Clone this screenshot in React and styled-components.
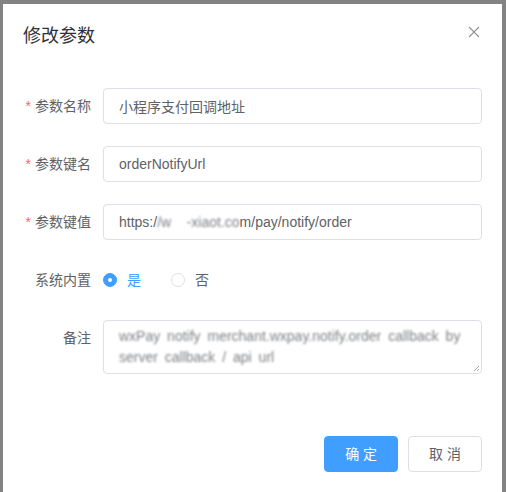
import React from "react";
import styled, { createGlobalStyle } from "styled-components";

const GlobalStyle = createGlobalStyle`
  html, body { margin: 0; padding: 0; }
  body {
    font-family: "Liberation Sans", "Noto Sans CJK SC", sans-serif;
    background: #838383;
  }
  * { box-sizing: border-box; }
`;

const Overlay = styled.div`
  width: 506px;
  height: 492px;
  background: #838383;
  padding: 4px 4px 0 3px;
  overflow: hidden;
`;

const Dialog = styled.div`
  width: 499px;
  min-height: 488px;
  background: #ffffff;
  display: flex;
  flex-direction: column;
`;

const Header = styled.div`
  display: flex;
  justify-content: space-between;
  align-items: flex-start;
  padding: 20px 20px 10px;
`;

const Title = styled.span`
  font-size: 18px;
  line-height: 24px;
  color: #303133;
`;

const CloseButton = styled.button`
  width: 16px;
  height: 16px;
  padding: 0;
  border: none;
  background: transparent;
  display: flex;
  align-items: center;
  justify-content: center;
  cursor: pointer;
`;

const Body = styled.div`
  padding: 30px 20px 30px;
`;

const FormItem = styled.div`
  display: flex;
  align-items: flex-start;
  margin-bottom: 22px;
`;

const Label = styled.label`
  width: 80px;
  flex: none;
  text-align: right;
  padding-right: 12px;
  line-height: 36px;
  font-size: 14px;
  color: #606266;
  white-space: nowrap;
`;

const Star = styled.span`
  color: #f56c6c;
  margin-right: 4px;
`;

const InputBox = styled.div`
  flex: 1;
  height: 36px;
  border: 1px solid #dcdfe6;
  border-radius: 4px;
  padding: 0 15px;
  display: flex;
  align-items: center;
  font-size: 14px;
  color: #606266;
  white-space: pre;
`;

const Redacted = styled.span`
  filter: blur(1.2px);
  color: #7d7f83;
`;

const RadioGroup = styled.div`
  display: flex;
  align-items: center;
  height: 36px;
`;

const Radio = styled.label`
  display: flex;
  align-items: center;
  margin-right: 30px;
  font-size: 14px;
  color: ${(p) => (p.$checked ? "#409eff" : "#606266")};
  cursor: pointer;
`;

const RadioDot = styled.span`
  width: 14px;
  height: 14px;
  border-radius: 50%;
  border: 1px solid ${(p) => (p.$checked ? "#409eff" : "#dcdfe6")};
  background: ${(p) => (p.$checked ? "#409eff" : "#ffffff")};
  display: flex;
  align-items: center;
  justify-content: center;
  &::after {
    content: "";
    width: 4px;
    height: 4px;
    border-radius: 50%;
    background: #ffffff;
    display: ${(p) => (p.$checked ? "block" : "none")};
  }
`;

const RadioText = styled.span`
  padding-left: 10px;
  line-height: 14px;
`;

const TextArea = styled.div`
  flex: 1;
  position: relative;
  height: 54px;
  border: 1px solid #dcdfe6;
  border-radius: 4px;
  padding: 5px 15px;
  font-size: 14px;
  line-height: 21px;
  color: #606266;
`;

const BlurText = styled.p`
  margin: 0;
  filter: blur(1.2px);
  color: #7d7f83;
  word-spacing: 3px;
`;

const Grip = styled.svg`
  position: absolute;
  right: 1px;
  bottom: 1px;
`;

const Footer = styled.div`
  display: flex;
  justify-content: flex-end;
  gap: 10px;
  padding: 10px 20px 20px;
`;

const Button = styled.button`
  height: 36px;
  padding: 0 20px;
  border-radius: 4px;
  font-family: "Liberation Sans", "Noto Sans CJK SC", sans-serif;
  font-size: 14px;
  line-height: 1;
  white-space: pre;
  cursor: pointer;
  border: 1px solid ${(p) => (p.$primary ? "#409eff" : "#dcdfe6")};
  background: ${(p) => (p.$primary ? "#409eff" : "#ffffff")};
  color: ${(p) => (p.$primary ? "#ffffff" : "#606266")};
`;

function Field({ label, required, children }) {
  return (
    <FormItem>
      <Label>
        {required && <Star>*</Star>}
        {label}
      </Label>
      {children}
    </FormItem>
  );
}

export default function App() {
  return (
    <>
      <GlobalStyle />
      <Overlay>
        <Dialog>
          <Header>
            <Title>修改参数</Title>
            <CloseButton aria-label="关闭">
              <svg width="12" height="12" viewBox="0 0 12 12">
                <path d="M1 1 L11 11 M11 1 L1 11" stroke="#909399" strokeWidth="1.1" fill="none" />
              </svg>
            </CloseButton>
          </Header>
          <Body>
            <Field label="参数名称" required>
              <InputBox>小程序支付回调地址</InputBox>
            </Field>
            <Field label="参数键名" required>
              <InputBox>orderNotifyUrl</InputBox>
            </Field>
            <Field label="参数键值" required>
              <InputBox>
                {"https:/"}<Redacted>{"/w    -xiaot.co"}</Redacted>{"m/pay/notify/order"}
              </InputBox>
            </Field>
            <Field label="系统内置">
              <RadioGroup>
                <Radio $checked>
                  <RadioDot $checked />
                  <RadioText>是</RadioText>
                </Radio>
                <Radio>
                  <RadioDot />
                  <RadioText>否</RadioText>
                </Radio>
              </RadioGroup>
            </Field>
            <Field label="备注">
              <TextArea>
                <BlurText>
                  wxPay notify merchant.wxpay.notify.order callback by server callback / api url
                </BlurText>
                <Grip width="8" height="8" viewBox="0 0 8 8">
                  <path d="M7 2 L2 7 M7 5 L5 7" stroke="#909399" strokeWidth="0.8" fill="none" />
                </Grip>
              </TextArea>
            </Field>
          </Body>
          <Footer>
            <Button $primary>确 定</Button>
            <Button>取 消</Button>
          </Footer>
        </Dialog>
      </Overlay>
    </>
  );
}
